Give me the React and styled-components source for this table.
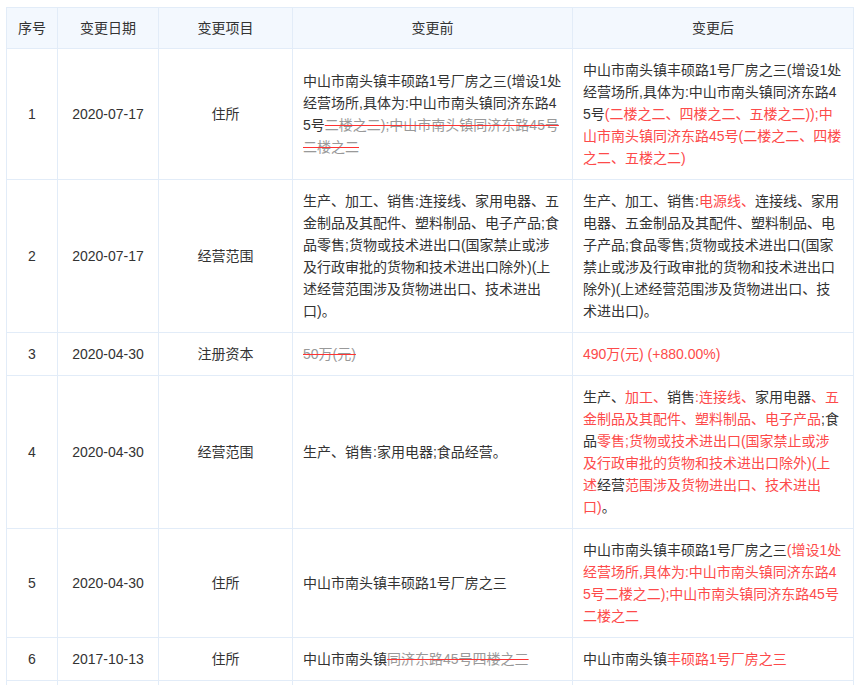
import React from 'react';
import styled, { createGlobalStyle } from 'styled-components';

const GlobalStyle = createGlobalStyle`
  body {
    margin: 0;
    background: #fff;
    font-family: "Liberation Sans", "Noto Sans CJK SC", sans-serif;
    color: #333;
  }
`;

const Page = styled.div`
  padding: 7px 0 0 6px;
`;

const Table = styled.table`
  width: 848px;
  table-layout: fixed;
  border-collapse: collapse;
  font-size: 14px;
  line-height: 22px;
`;

const HeadCell = styled.th`
  background: #f3f8fe;
  border: 1px solid #e2ecf8;
  padding: 9px 10px;
  font-weight: normal;
  text-align: center;
  color: #333;
`;

const Cell = styled.td`
  border: 1px solid #e2ecf8;
  padding: 10px;
  vertical-align: middle;
  text-align: ${p => (p.$left ? 'left' : 'center')};
  word-break: break-all;
`;

const Added = styled.span`
  color: #fd4a4a;
`;

const Removed = styled.span`
  color: #999;
  text-decoration: line-through;
  text-decoration-color: #f33;
`;

const cols = [51, 101, 134, 280, 281];

const rows = [
  {
    no: 1,
    date: '2020-07-17',
    item: '住所',
    before: [
      ['n', '中山市南头镇丰硕路1号厂房之三(增设1处经营场所,具体为:中山市南头镇同济东路45号'],
      ['d', '二楼之二);中山市南头镇同济东路45号二楼之二'],
    ],
    after: [
      ['n', '中山市南头镇丰硕路1号厂房之三(增设1处经营场所,具体为:中山市南头镇同济东路45号'],
      ['r', '(二楼之二、四楼之二、五楼之二));中山市南头镇同济东路45号(二楼之二、四楼之二、五楼之二)'],
    ],
  },
  {
    no: 2,
    date: '2020-07-17',
    item: '经营范围',
    before: [
      ['n', '生产、加工、销售:连接线、家用电器、五金制品及其配件、塑料制品、电子产品;食品零售;货物或技术进出口(国家禁止或涉及行政审批的货物和技术进出口除外)(上述经营范围涉及货物进出口、技术进出口)。'],
    ],
    after: [
      ['n', '生产、加工、销售:'],
      ['r', '电源线、'],
      ['n', '连接线、家用电器、五金制品及其配件、塑料制品、电子产品;食品零售;货物或技术进出口(国家禁止或涉及行政审批的货物和技术进出口除外)(上述经营范围涉及货物进出口、技术进出口)。'],
    ],
  },
  {
    no: 3,
    date: '2020-04-30',
    item: '注册资本',
    before: [['d', '50万(元)']],
    after: [['r', '490万(元) (+880.00%)']],
  },
  {
    no: 4,
    date: '2020-04-30',
    item: '经营范围',
    before: [['n', '生产、销售:家用电器;食品经营。']],
    after: [
      ['n', '生产、'],
      ['r', '加工、'],
      ['n', '销售'],
      ['r', ':连接线、'],
      ['n', '家用电器'],
      ['r', '、五金制品及其配件、塑料制品、电子产品'],
      ['n', ';食品'],
      ['r', '零售;货物或技术进出口(国家禁止或涉及行政审批的货物和技术进出口除外)(上述'],
      ['n', '经营'],
      ['r', '范围涉及货物进出口、技术进出口)'],
      ['n', '。'],
    ],
  },
  {
    no: 5,
    date: '2020-04-30',
    item: '住所',
    before: [['n', '中山市南头镇丰硕路1号厂房之三']],
    after: [
      ['n', '中山市南头镇丰硕路1号厂房之三'],
      ['r', '(增设1处经营场所,具体为:中山市南头镇同济东路45号二楼之二);中山市南头镇同济东路45号二楼之二'],
    ],
  },
  {
    no: 6,
    date: '2017-10-13',
    item: '住所',
    before: [
      ['n', '中山市南头镇'],
      ['d', '同济东路45号四楼之三'],
    ],
    after: [
      ['n', '中山市南头镇'],
      ['r', '丰硕路1号厂房之三'],
    ],
  },
  {
    no: 7,
    date: '2017-10-13',
    item: '经营范围',
    before: [['n', '生产、销售:家用电器。']],
    after: [
      ['n', '生产、销售:家用电器'],
      ['r', ';食品经营'],
      ['n', '。'],
    ],
  },
];

const Diff = ({ parts }) =>
  parts.map(([kind, text], i) => {
    if (kind === 'r') return <Added key={i}>{text}</Added>;
    if (kind === 'd') return <Removed key={i}>{text}</Removed>;
    return <span key={i}>{text}</span>;
  });

export default function App() {
  return (
    <Page>
      <GlobalStyle />
      <Table>
        <colgroup>
          {cols.map((w, i) => (
            <col key={i} style={{ width: w }} />
          ))}
        </colgroup>
        <thead>
          <tr>
            <HeadCell>序号</HeadCell>
            <HeadCell>变更日期</HeadCell>
            <HeadCell>变更项目</HeadCell>
            <HeadCell>变更前</HeadCell>
            <HeadCell>变更后</HeadCell>
          </tr>
        </thead>
        <tbody>
          {rows.map(row => (
            <tr key={row.no}>
              <Cell>{row.no}</Cell>
              <Cell>{row.date}</Cell>
              <Cell>{row.item}</Cell>
              <Cell $left>
                <Diff parts={row.before} />
              </Cell>
              <Cell $left>
                <Diff parts={row.after} />
              </Cell>
            </tr>
          ))}
        </tbody>
      </Table>
    </Page>
  );
}
